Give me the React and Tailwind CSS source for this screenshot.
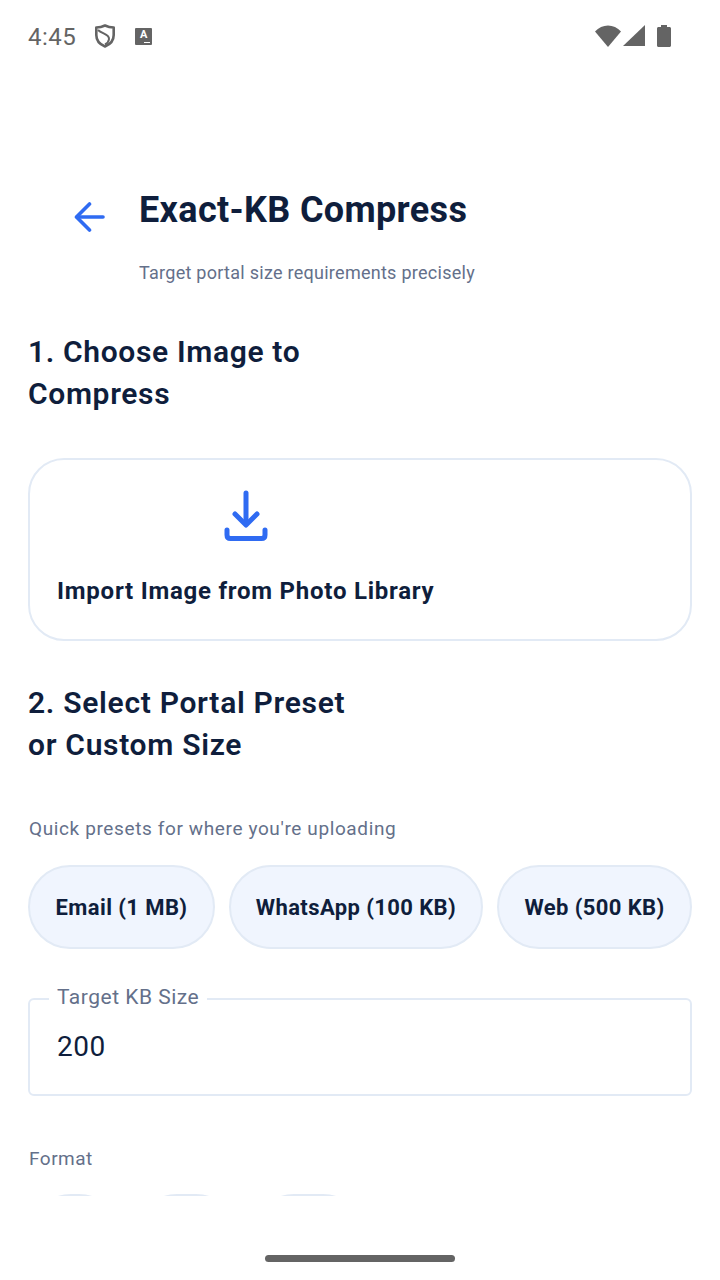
function StatusBar() {
  return (
    <div className="flex h-[72px] shrink-0 items-center justify-between pl-[28px] pr-[49px] text-[#646464]">
      <div className="flex items-center">
        <span className="mt-[1px] text-[24px] leading-none tracking-[0.5px]">4:45</span>
        <svg className="ml-[19px]" width="20" height="24" viewBox="0 0 20 24" fill="none" stroke="#646464" strokeWidth="2.600">
          <path d="M10 1.500 C13 3 16 3.500 18.700 3.500 V11 C18.700 16.500 15 20.500 10 22.500 C5 20.500 1.300 16.500 1.300 11 V3.500 C4 3.500 7 3 10 1.500 Z" strokeLinejoin="round" />
          <path d="M3 6 C7 10 14.500 10 14 15 C13.700 18 12 19.500 10 20.500" strokeWidth="2" />
        </svg>
        <div className="relative ml-[20px] flex h-[17px] w-[17px] items-start justify-center rounded-[1px] bg-[#646464] text-[11px] font-bold leading-[13px] text-white">
          A
          <span className="absolute bottom-[2px] right-[2px] h-[1px] w-[6px] bg-white" />
        </div>
      </div>
      <div className="flex items-center">
        <svg width="26" height="22" viewBox="0 0 26 22" fill="#646464">
          <path d="M0 6.500 C7 -1.500 19 -1.500 26 6.500 L13 22 Z" />
        </svg>
        <svg className="ml-[2px]" width="22" height="22" viewBox="0 0 22 22" fill="#646464">
          <path d="M22 0 V21 H0 Z" />
        </svg>
        <svg className="ml-[12px]" width="14" height="22" viewBox="0 0 14 22" fill="#646464">
          <path d="M4 0 H10 V2 H12.500 C13.300 2 14 2.700 14 3.500 V20.500 C14 21.300 13.300 22 12.500 22 H1.500 C0.700 22 0 21.300 0 20.500 V3.500 C0 2.700 0.700 2 1.500 2 H4 Z" />
        </svg>
      </div>
    </div>
  );
}

function Pill({ label, className }) {
  return (
    <button className={`flex h-[84px] items-center justify-center rounded-[42px] border-2 border-[#e2eaf5] bg-[#f0f5fe] text-[22px] font-bold tracking-[0.4px] text-[#0f1e3c] ${className}`}>
      {label}
    </button>
  );
}

export default function App() {
  return (
    <div className="flex h-[1280px] w-[720px] flex-col overflow-hidden bg-white font-['Roboto',sans-serif]">
      <StatusBar />

      {/* scroll area, format chips are cut off at the bottom */}
      <div className="h-[1124px] shrink-0 overflow-hidden px-[28px]">
        <div className="mt-[114px] flex">
          <div className="w-[111px] pl-[46px] pt-[16px]">
            <svg width="32" height="30" viewBox="0 0 32 30" fill="none" stroke="#2f6bf2" strokeWidth="3.600" strokeLinecap="round" strokeLinejoin="round">
              <path d="M29 15 H3" />
              <path d="M15.500 2 L2.500 15 L15.500 28" />
            </svg>
          </div>
          <div>
            <h1 className="text-[36px] font-bold leading-[48px] tracking-[0.35px] text-[#0f1e3c]">Exact-KB Compress</h1>
            <p className="mt-[26px] text-[18px] leading-[26px] tracking-[0.27px] text-[#64708a]">Target portal size requirements precisely</p>
          </div>
        </div>

        <h2 className="mt-[45px] w-[340px] text-[30px] font-semibold leading-[42px] tracking-[0.65px] text-[#0f1e3c]">
          1. Choose Image to Compress
        </h2>

        <div className="mt-[43px] h-[183px] rounded-[36px] border-2 border-[#e2eaf5] bg-white px-[27px]">
          <div className="flex w-max flex-col items-center pt-[30px]">
            <svg width="44" height="52" viewBox="0 0 44 52" fill="none" stroke="#2f6bf2" strokeWidth="5" strokeLinecap="round" strokeLinejoin="round">
              <path d="M22 3 V33" />
              <path d="M11 24 L22 35 L33 24" />
              <path d="M3 40 V45 C3 47.500 4 48.500 6.500 48.500 H37.500 C40 48.500 41 47.500 41 45 V40" />
            </svg>
            <span className="mt-[33px] text-[24px] font-bold leading-[32px] tracking-[0.76px] text-[#0f1e3c]">
              Import Image from Photo Library
            </span>
          </div>
        </div>

        <h2 className="mt-[41px] w-[340px] text-[30px] font-semibold leading-[42px] tracking-[0.7px] text-[#0f1e3c]">
          2. Select Portal Preset or Custom Size
        </h2>

        <p className="ml-[1px] mt-[50px] text-[19px] leading-[26px] tracking-[0.62px] text-[#64708a]">
          Quick presets for where you're uploading
        </p>

        <div className="mt-[23px] flex justify-between">
          <Pill label="Email (1 MB)" className="w-[187px]" />
          <Pill label="WhatsApp (100 KB)" className="w-[254px]" />
          <Pill label="Web (500 KB)" className="w-[195px]" />
        </div>

        <div className="relative mt-[49px] flex h-[98px] items-center rounded-[6px] border-2 border-[#e2eaf5] px-[27px] text-[28px] tracking-[0.5px] text-[#0f1e3c]">
          <span className="absolute left-[19px] top-[-15px] bg-white px-[8px] text-[21px] leading-[24px] tracking-[0.5px] text-[#64708a]">
            Target KB Size
          </span>
          200
        </div>

        <p className="ml-[1px] mt-[50px] text-[19px] leading-[26px] tracking-[0.5px] text-[#64708a]">Format</p>

        <div className="ml-[1px] mt-[22px] flex gap-[14px]">
          <Pill className="w-[92px] shrink-0" />
          <Pill className="w-[103px] shrink-0" />
          <Pill className="w-[113px] shrink-0" />
        </div>
      </div>

      <div className="flex flex-1 justify-center pt-[59px]">
        <div className="h-[7px] w-[190px] rounded-full bg-[#646464]" />
      </div>
    </div>
  );
}
